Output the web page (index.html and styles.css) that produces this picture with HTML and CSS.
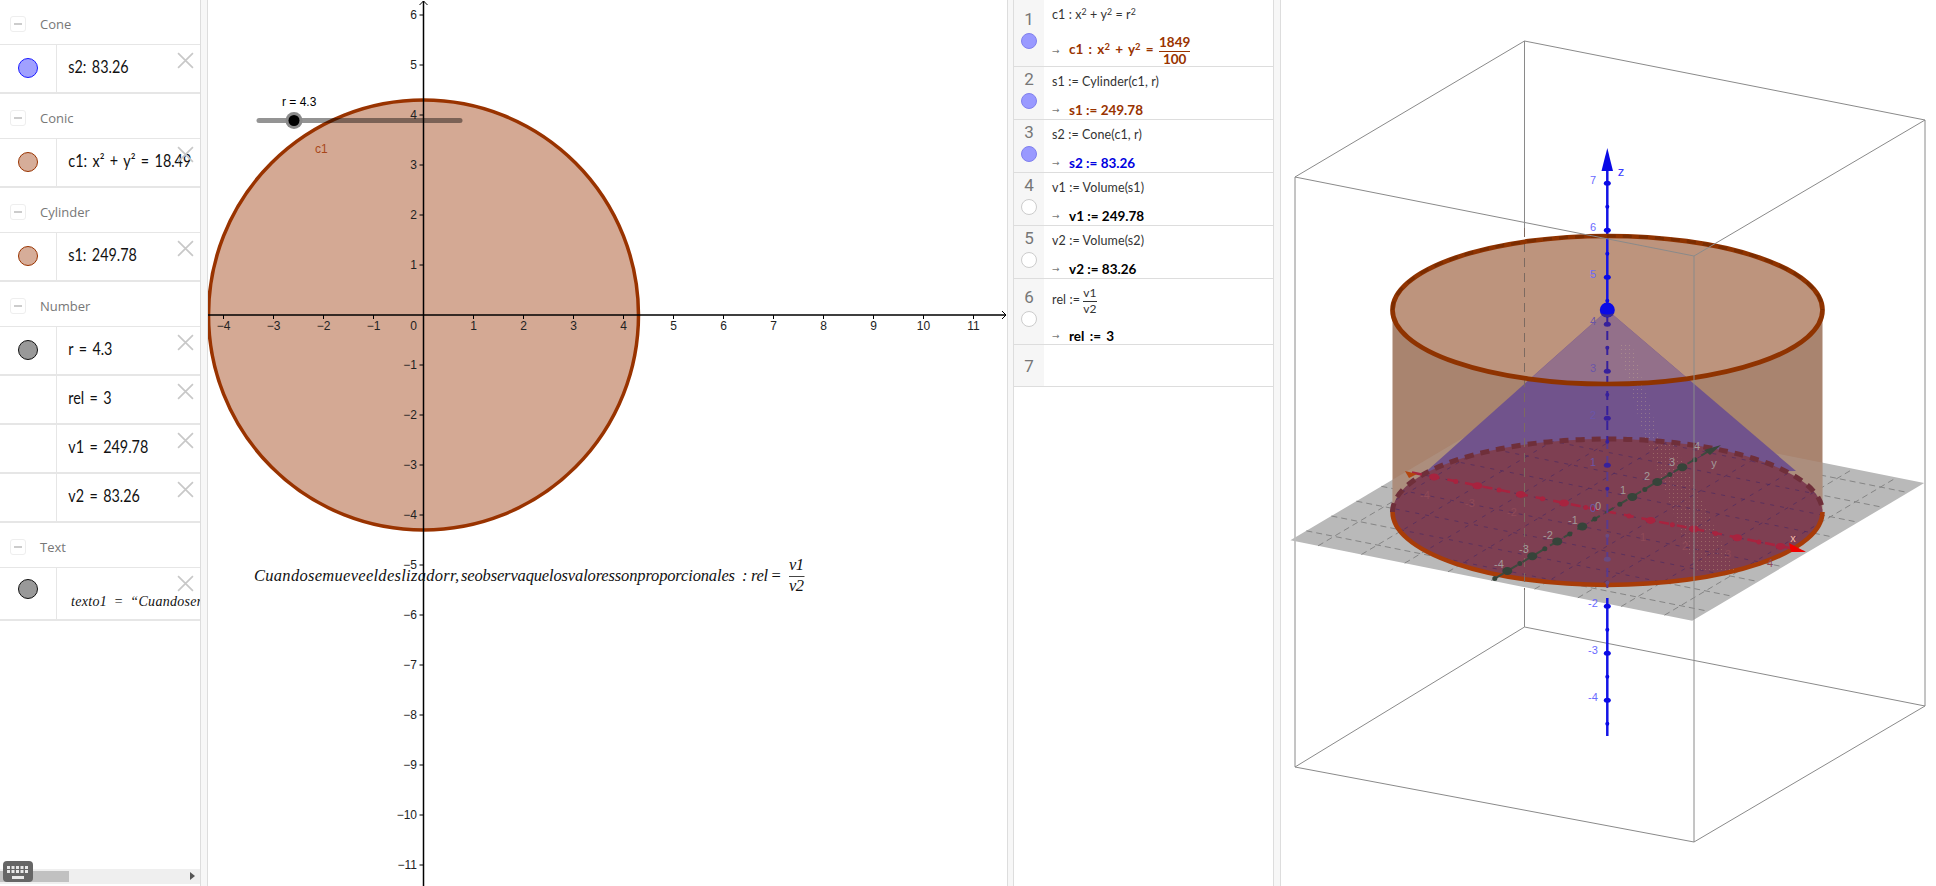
FILE: index.html
```html
<!DOCTYPE html>
<html lang="en">
<head>
    <meta charset="UTF-8">
    <title>GeoGebra - Cylinder and Cone</title>
    <link rel="stylesheet" href="styles.css">
</head>
<body>
    <!-- Algebra view -->
    <aside class="algebra">
        <div class="algebra-list">
            <div class="group"><span class="collapse"></span>Cone</div>
            <div class="row">
                <div class="row-marble"><span class="marble marble-blue"></span></div>
                <div class="row-value">s2: 83.26</div>
                <svg class="close" viewBox="0 0 16 16"><path d="M1 1L15 15M15 1L1 15"/></svg>
            </div>

            <div class="group"><span class="collapse"></span>Conic</div>
            <div class="row">
                <div class="row-marble"><span class="marble marble-brown"></span></div>
                <div class="row-value">c1: x² + y² = 18.49</div>
                <svg class="close" viewBox="0 0 16 16"><path d="M1 1L15 15M15 1L1 15"/></svg>
            </div>

            <div class="group"><span class="collapse"></span>Cylinder</div>
            <div class="row">
                <div class="row-marble"><span class="marble marble-brown"></span></div>
                <div class="row-value">s1: 249.78</div>
                <svg class="close" viewBox="0 0 16 16"><path d="M1 1L15 15M15 1L1 15"/></svg>
            </div>

            <div class="group"><span class="collapse"></span>Number</div>
            <div class="row">
                <div class="row-marble"><span class="marble marble-gray"></span></div>
                <div class="row-value">r = 4.3</div>
                <svg class="close" viewBox="0 0 16 16"><path d="M1 1L15 15M15 1L1 15"/></svg>
            </div>
            <div class="row">
                <div class="row-marble"></div>
                <div class="row-value">rel = 3</div>
                <svg class="close" viewBox="0 0 16 16"><path d="M1 1L15 15M15 1L1 15"/></svg>
            </div>
            <div class="row">
                <div class="row-marble"></div>
                <div class="row-value">v1 = 249.78</div>
                <svg class="close" viewBox="0 0 16 16"><path d="M1 1L15 15M15 1L1 15"/></svg>
            </div>
            <div class="row">
                <div class="row-marble"></div>
                <div class="row-value">v2 = 83.26</div>
                <svg class="close" viewBox="0 0 16 16"><path d="M1 1L15 15M15 1L1 15"/></svg>
            </div>

            <div class="group"><span class="collapse"></span>Text</div>
            <div class="row row-text">
                <div class="row-marble"><span class="marble marble-gray"></span></div>
                <div class="row-value row-latex">texto1 = “Cuandosen</div>
                <svg class="close" viewBox="0 0 16 16"><path d="M1 1L15 15M15 1L1 15"/></svg>
            </div>
        </div>

        <div class="scrollbar">
            <div class="scroll-thumb"></div>
            <span class="scroll-arrow"></span>
        </div>
        <svg class="keyboard" viewBox="0 0 30 21">
            <rect class="key-bg" width="30" height="21" rx="4"/>
            <path class="key" d="M4 5h3v3h-3zM8.500 5h3v3h-3zM13 5h3v3h-3zM17.500 5h3v3h-3zM22 5h3v3h-3zM4 9h3v3h-3zM8.500 9h3v3h-3zM13 9h3v3h-3zM17.500 9h3v3h-3zM22 9h3v3h-3zM9 15h12v3h-12z"/>
        </svg>
    </aside>

    <div class="splitter"></div>

    <!-- Graphics view -->
    <svg class="graphics" viewBox="208 0 799 886">
        <circle class="conic" cx="423.500" cy="315" r="215"/>
        <g class="axis">
            <path d="M423.500 1V886M208 315H1006"/>
            <path d="M419.500 5L423.500 1L427.500 5M1002 311L1006 315L1002 319"/>
            <path d="M223.500 315v4M273.500 315v4M323.500 315v4M373.500 315v4M473.500 315v4M523.500 315v4M573.500 315v4M623.500 315v4M673.500 315v4M723.500 315v4M773.500 315v4M823.500 315v4M873.500 315v4M923.500 315v4M973.500 315v4"/>
            <path d="M419.500 15h4M419.500 65h4M419.500 115h4M419.500 165h4M419.500 215h4M419.500 265h4M419.500 365h4M419.500 415h4M419.500 465h4M419.500 515h4M419.500 565h4M419.500 615h4M419.500 665h4M419.500 715h4M419.500 765h4M419.500 815h4M419.500 865h4"/>
        </g>
        <g class="tick-x">
            <text x="223.500" y="330">−4</text>
            <text x="273.500" y="330">−3</text>
            <text x="323.500" y="330">−2</text>
            <text x="373.500" y="330">−1</text>
            <text x="413.500" y="330">0</text>
            <text x="473.500" y="330">1</text>
            <text x="523.500" y="330">2</text>
            <text x="573.500" y="330">3</text>
            <text x="623.500" y="330">4</text>
            <text x="673.500" y="330">5</text>
            <text x="723.500" y="330">6</text>
            <text x="773.500" y="330">7</text>
            <text x="823.500" y="330">8</text>
            <text x="873.500" y="330">9</text>
            <text x="923.500" y="330">10</text>
            <text x="973.500" y="330">11</text>
        </g>
        <g class="tick-y">
            <text x="417" y="19">6</text>
            <text x="417" y="69">5</text>
            <text x="417" y="119">4</text>
            <text x="417" y="169">3</text>
            <text x="417" y="219">2</text>
            <text x="417" y="269">1</text>
            <text x="417" y="369">−1</text>
            <text x="417" y="419">−2</text>
            <text x="417" y="469">−3</text>
            <text x="417" y="519">−4</text>
            <text x="417" y="569">−5</text>
            <text x="417" y="619">−6</text>
            <text x="417" y="669">−7</text>
            <text x="417" y="719">−8</text>
            <text x="417" y="769">−9</text>
            <text x="417" y="819">−10</text>
            <text x="417" y="869">−11</text>
        </g>
        <text class="conic-label" x="315" y="153">c1</text>

        <!-- slider -->
        <line class="slider-track" x1="259" y1="120.500" x2="460" y2="120.500"/>
        <circle class="slider-ring" cx="294" cy="120.500" r="8.500"/>
        <circle class="slider-knob" cx="294" cy="120.500" r="5.500"/>
        <text class="slider-label" x="282" y="106">r = 4.3</text>

        <!-- text object -->
        <g class="math-text">
            <text x="254" y="581" textLength="205">Cuandosemueveeldeslizadorr,</text>
            <text x="461" y="581" textLength="274">seobservaquelosvaloressonproporcionales</text>
            <text x="742" y="581">:</text>
            <text x="751" y="581" textLength="17">rel</text>
            <text class="math-upright" x="771.500" y="581">=</text>
            <text x="789" y="569.500" textLength="15">v1</text>
            <text x="789" y="591" textLength="15">v2</text>
            <line x1="789" y1="576.500" x2="804.500" y2="576.500"/>
        </g>
    </svg>

    <div class="splitter splitter-narrow"></div>

    <!-- CAS view -->
    <section class="cas">
        <div class="cas-row cas-row-tall">
            <div class="cas-side"><span class="cas-num">1</span><span class="cas-marble cas-marble-on"></span></div>
            <div class="cas-body">
                <div class="cas-input">c1 : x<sup>2</sup> + y<sup>2</sup> = r<sup>2</sup></div>
                <div class="cas-output"><span class="cas-arrow">→</span><span class="out-brown out-spaced">c1 : x<sup>2</sup> + y<sup>2</sup> = <span class="frac"><span>1849</span><span>100</span></span></span></div>
            </div>
        </div>
        <div class="cas-row">
            <div class="cas-side"><span class="cas-num">2</span><span class="cas-marble cas-marble-on"></span></div>
            <div class="cas-body">
                <div class="cas-input">s1 := Cylinder(c1, r)</div>
                <div class="cas-output"><span class="cas-arrow">→</span><span class="out-brown">s1 := 249.78</span></div>
            </div>
        </div>
        <div class="cas-row">
            <div class="cas-side"><span class="cas-num">3</span><span class="cas-marble cas-marble-on"></span></div>
            <div class="cas-body">
                <div class="cas-input">s2 := Cone(c1, r)</div>
                <div class="cas-output"><span class="cas-arrow">→</span><span class="out-blue">s2 := 83.26</span></div>
            </div>
        </div>
        <div class="cas-row">
            <div class="cas-side"><span class="cas-num">4</span><span class="cas-marble"></span></div>
            <div class="cas-body">
                <div class="cas-input">v1 := Volume(s1)</div>
                <div class="cas-output"><span class="cas-arrow">→</span><span class="out-black">v1 := 249.78</span></div>
            </div>
        </div>
        <div class="cas-row">
            <div class="cas-side"><span class="cas-num">5</span><span class="cas-marble"></span></div>
            <div class="cas-body">
                <div class="cas-input">v2 := Volume(s2)</div>
                <div class="cas-output"><span class="cas-arrow">→</span><span class="out-black">v2 := 83.26</span></div>
            </div>
        </div>
        <div class="cas-row cas-row-frac">
            <div class="cas-side"><span class="cas-num">6</span><span class="cas-marble"></span></div>
            <div class="cas-body">
                <div class="cas-input">rel := <span class="frac frac-thin"><span>v1</span><span>v2</span></span></div>
                <div class="cas-output"><span class="cas-arrow">→</span><span class="out-black out-spaced">rel := 3</span></div>
            </div>
        </div>
        <div class="cas-row cas-row-empty">
            <div class="cas-side"><span class="cas-num">7</span></div>
            <div class="cas-body"></div>
        </div>
    </section>

    <div class="splitter"></div>

    <!-- 3D view -->
    <svg class="view3d" viewBox="1281 0 655 886">
        <defs>
            <clipPath id="topDisc"><ellipse cx="1607.500" cy="310" rx="215" ry="74"/></clipPath>
            <clipPath id="bottomDisc"><ellipse cx="1607.500" cy="512" rx="215" ry="73"/></clipPath>
            <clipPath id="body"><path d="M1392.500 310H1822.500V512A215 73 0 0 1 1392.500 512Z"/></clipPath>
            <path id="grid" d="M1506.400 412.180L1908.200 492.580M1481.400 427L1883.200 507.400M1456.400 441.840L1858.200 522.240M1431.400 456.670L1833.200 537.070M1406.400 471.500L1808.200 551.900M1381.400 486.330L1783.200 566.730M1356.400 501.160L1758.200 581.560M1331.400 516L1733.200 596.400M1306.400 530.820L1708.200 611.220M1664.500 615.180L1896.500 477.580M1621.200 606.500L1853.200 468.900M1577.900 597.840L1809.900 460.240M1534.600 589.170L1766.600 451.570M1491.300 580.500L1723.300 442.900M1448 571.830L1680 434.230M1404.700 563.160L1636.700 425.560M1361.400 554.500L1593.400 416.900M1318.100 545.820L1550.100 408.220"/>
            <path id="coneShape" d="M1607.500 310L1420 477L1796 471Z"/>
            <pattern id="dots" width="4" height="4" patternUnits="userSpaceOnUse">
                <rect class="dot" x="1" y="1" width="1" height="1"/>
            </pattern>
        </defs>

        <!-- back of the bounding box -->
        <g class="box-line">
            <path d="M1295 177L1524.500 41L1925 120M1295 767L1524.500 627L1925 706L1694 842L1295 767"/>
            <path d="M1295 177V767M1524.500 41V228M1524.500 590V627M1925 120V706"/>
        </g>

        <!-- xOy plane -->
        <polygon class="plane" points="1692.200,620.700 1924.200,483.100 1522.400,402.700 1290.400,540.300"/>
        <use class="plane-grid" href="#grid"/>

        <!-- cylinder -->
        <path class="cyl-body" d="M1392.500 310H1822.500V512A215 73 0 0 1 1392.500 512Z"/>
        <g clip-path="url(#body)">
            <polygon class="plane-through" points="1692.200,620.700 1924.200,483.100 1522.400,402.700 1290.400,540.300"/>
        </g>
        <ellipse class="cyl-top" cx="1607.500" cy="310" rx="215" ry="74"/>

        <!-- cone -->
        <use class="cone" href="#coneShape"/>
        <g clip-path="url(#topDisc)"><use class="cone-top" href="#coneShape"/></g>

        <!-- bottom disc -->
        <ellipse class="disc" cx="1607.500" cy="512" rx="215" ry="73"/>
        <g clip-path="url(#bottomDisc)"><use class="disc-grid" href="#grid"/></g>
        <path class="disc-back" d="M1392.500 512A215 73 0 0 1 1822.500 512"/>
        <path class="disc-front" d="M1392.500 512A215 73 0 0 0 1822.500 512"/>

        <!-- moire strip the renderer leaves on the cone -->
        <polygon class="moire" points="1618,345 1632,345 1660,440 1645,440"/>
        <polygon class="moire" points="1648,445 1675,445 1735,570 1695,570"/>

        <!-- dashed back edge inside the cylinder -->
        <path class="box-dashed" d="M1524.500 228V590"/>

        <!-- x axis -->
        <path class="x-axis" d="M1412 472.500L1795 549"/>
        <polygon class="x-arrow" points="1789,543 1806,552 1791,552"/>
        <polygon class="x-arrow-back" points="1405,471 1417,474 1409,478"/>
        <g class="x-ticks">
            <ellipse cx="1434.100" cy="477" rx="5" ry="3.500"/><ellipse cx="1477.400" cy="485.700" rx="5" ry="3.500"/><ellipse cx="1520.700" cy="494.400" rx="5" ry="3.500"/><ellipse cx="1564" cy="503" rx="5" ry="3.500"/><ellipse cx="1650.600" cy="520.400" rx="5" ry="3.500"/><ellipse cx="1693.900" cy="529" rx="5" ry="3.500"/><ellipse cx="1737.200" cy="537.700" rx="5" ry="3.500"/><ellipse cx="1780.500" cy="546.400" rx="5" ry="3.500"/>
            <circle cx="1455.800" cy="481.400" r="2.500"/><circle cx="1499" cy="490" r="2.500"/><circle cx="1542.400" cy="498.700" r="2.500"/><circle cx="1585.700" cy="507.400" r="2.500"/><circle cx="1629" cy="516" r="2.500"/><circle cx="1672.300" cy="524.700" r="2.500"/><circle cx="1715.600" cy="533.400" r="2.500"/><circle cx="1758.900" cy="542" r="2.500"/>
        </g>

        <!-- y axis -->
        <path class="y-axis" d="M1495 578.400L1708 451.500"/>
        <polygon class="y-arrow" points="1704,450 1721,445 1710,455"/>
        <g class="y-ticks">
            <ellipse cx="1682.300" cy="467.200" rx="5" ry="4"/><ellipse cx="1657.300" cy="482" rx="5" ry="4"/><ellipse cx="1632.300" cy="496.900" rx="5" ry="4"/><ellipse cx="1582.300" cy="526.500" rx="5" ry="4"/><ellipse cx="1557.300" cy="541.400" rx="5" ry="4"/><ellipse cx="1532.300" cy="556.200" rx="5" ry="4"/><ellipse cx="1507.300" cy="571" rx="5" ry="4"/>
            <circle cx="1694.800" cy="459.800" r="2.500"/><circle cx="1669.800" cy="474.600" r="2.500"/><circle cx="1644.800" cy="489.500" r="2.500"/><circle cx="1619.800" cy="504.300" r="2.500"/><circle cx="1594.800" cy="519.100" r="2.500"/><circle cx="1569.800" cy="533.900" r="2.500"/><circle cx="1544.800" cy="548.800" r="2.500"/><circle cx="1519.800" cy="563.600" r="2.500"/><circle cx="1494.800" cy="578.400" r="2.500"/>
        </g>

        <!-- z axis -->
        <path class="z-axis" d="M1607.300 168V305M1607.300 598V736"/>
        <path class="z-axis-in" d="M1607.300 316V440"/>
        <path class="z-axis-faded" d="M1607.300 440V588"/>
        <polygon class="z-arrow" points="1607.300,148 1613,171 1601.500,171"/>
        <g class="z-ticks">
            <ellipse cx="1607.300" cy="183.300" rx="3.500" ry="2.500"/><ellipse cx="1607.300" cy="230.300" rx="3.500" ry="2.500"/><ellipse cx="1607.300" cy="277.300" rx="3.500" ry="2.500"/>
            <circle cx="1607.300" cy="206.800" r="2"/><circle cx="1607.300" cy="253.800" r="2"/><circle cx="1607.300" cy="300.800" r="2"/>
            <ellipse cx="1607.300" cy="606.300" rx="3.500" ry="2.500"/><ellipse cx="1607.300" cy="653.300" rx="3.500" ry="2.500"/><ellipse cx="1607.300" cy="700.300" rx="3.500" ry="2.500"/>
            <circle cx="1607.300" cy="629.800" r="2"/><circle cx="1607.300" cy="676.800" r="2"/><circle cx="1607.300" cy="723.800" r="2"/>
        </g>
        <g class="z-ticks-in">
            <ellipse cx="1607.300" cy="324.300" rx="3.500" ry="2.500"/><ellipse cx="1607.300" cy="371.300" rx="3.500" ry="2.500"/><ellipse cx="1607.300" cy="418.300" rx="3.500" ry="2.500"/><ellipse cx="1607.300" cy="465.300" rx="3.500" ry="2.500"/>
            <circle cx="1607.300" cy="347.800" r="2"/><circle cx="1607.300" cy="394.800" r="2"/><circle cx="1607.300" cy="441.800" r="2"/><circle cx="1607.300" cy="488.800" r="2"/>
        </g>
        <g class="z-ticks-faded">
            <ellipse cx="1607.300" cy="559.300" rx="3.500" ry="2.500"/><circle cx="1607.300" cy="535.800" r="2"/><circle cx="1607.300" cy="582.800" r="2"/>
        </g>

        <g class="labels-z">
            <text x="1593" y="184">7</text><text x="1593" y="231">6</text><text x="1593" y="278">5</text>
            <text x="1593" y="607">-2</text><text x="1593" y="654">-3</text><text x="1593" y="701">-4</text>
            <text class="axis-name" x="1621" y="176">z</text>
        </g>
        <g class="labels-z-in">
            <text x="1593" y="325">4</text><text x="1593" y="372">3</text><text x="1593" y="419">2</text><text x="1593" y="466">1</text><text x="1593" y="512">0</text>
        </g>
        <g class="labels-y">
            <text x="1697" y="450">4</text><text x="1672" y="466">3</text><text x="1647" y="480">2</text><text x="1623" y="494">1</text><text x="1598" y="510">0</text><text x="1573" y="524">-1</text><text x="1548" y="539">-2</text><text x="1524" y="553">-3</text><text x="1499" y="568">-4</text><text x="1714" y="467">y</text>
        </g>
        <g class="labels-x">
            <text x="1425" y="499">-4</text><text x="1470" y="507">-3</text><text x="1512" y="516">-2</text><text x="1643" y="541">1</text><text x="1685" y="550">2</text><text x="1728" y="558">3</text><text x="1770" y="567">4</text>
        </g>
        <text class="label-x-name" x="1793" y="542">x</text>

        <!-- top rim -->
        <ellipse class="cyl-rim" cx="1607.500" cy="310" rx="215" ry="74"/>
        <path class="cyl-rim-back" d="M1392.500 310A215 74 0 0 1 1822.500 310"/>

        <!-- apex point -->
        <circle class="apex" cx="1607.300" cy="310" r="7.500"/>
        <path class="apex-shade" d="M1600.500 313A7.500 7.500 0 0 0 1614 313A10 5 0 0 1 1600.500 313Z"/>

        <!-- front of the bounding box -->
        <g class="box-line">
            <path d="M1295 177L1694 256L1925 120M1694 256V842"/>
        </g>
    </svg>
</body>
</html>
```

FILE: styles.css
```css
* {
    box-sizing: border-box;
    margin: 0;
    padding: 0;
}

body {
    display: flex;
    height: 886px;
    overflow: hidden;
    background: white;
    font-family: "Lato", sans-serif;
}

/* algebra view */
.algebra {
    position: relative;
    width: 200px;
    flex: none;
    display: flex;
    flex-direction: column;
    overflow: hidden;
}

.algebra-list {
    flex: 1;
}

.group {
    height: 45px;
    display: flex;
    align-items: center;
    padding-left: 10px;
    padding-top: 3px;
    font-family: "Open Sans", sans-serif;
    font-size: 13px;
    color: #777;
    border-bottom: 1px solid #e6e6e6;
}

.collapse {
    position: relative;
    width: 16px;
    height: 16px;
    margin-right: 14px;
    border: 1px solid #eee;
    border-radius: 3px;
}

.collapse::after {
    content: "";
    position: absolute;
    left: 3px;
    top: 6px;
    width: 8px;
    height: 2px;
    background: #ccc;
}

.row {
    position: relative;
    height: 49px;
    display: flex;
    border-bottom: 2px solid #e6e6e6;
}

.row-text {
    height: 53px;
}

.row-marble {
    width: 57px;
    flex: none;
    display: flex;
    align-items: center;
    justify-content: center;
    padding-bottom: 1px;
    border-right: 1px solid #e6e6e6;
}

.row-text .row-marble {
    padding-bottom: 9px;
}

.row-value {
    padding-left: 13px;
    font-size: 16.500px;
    line-height: 45px;
    color: #111;
    white-space: nowrap;
    word-spacing: 2px;
    transform: scaleX(0.87);
    transform-origin: left center;
}

.row-latex {
    padding-left: 14px;
    padding-top: 11px;
    font-family: "Liberation Serif", serif;
    font-style: italic;
    font-size: 14px;
    letter-spacing: 0.3px;
    word-spacing: 3px;
    transform: none;
}

.marble {
    width: 20px;
    height: 20px;
    border-radius: 50%;
    border: 1px solid #000;
}

.marble-blue {
    background: #a0a0ff;
    border-color: #1a1aff;
}

.marble-brown {
    background: #d6ad99;
    border-color: #993300;
}

.marble-gray {
    background: #999;
    border-color: #111;
}

.close {
    position: absolute;
    top: 7px;
    right: 6px;
    width: 17px;
    height: 17px;
    fill: none;
    stroke: #c8c8c8;
    stroke-width: 1.600;
}

.scrollbar {
    position: relative;
    height: 15px;
    margin-bottom: 2px;
    background: #efefef;
}

.scroll-thumb {
    width: 69px;
    height: 11px;
    margin-top: 2px;
    background: #c1c1c1;
}

.scroll-arrow {
    position: absolute;
    right: 5px;
    top: 3px;
    border-left: 5px solid #555;
    border-top: 4px solid transparent;
    border-bottom: 4px solid transparent;
}

.keyboard {
    position: absolute;
    left: 3px;
    bottom: 4px;
    width: 30px;
    height: 21px;
}

.key-bg {
    fill: #666;
}

.key {
    fill: #e8e8e8;
}

/* splitters */
.splitter {
    width: 8px;
    flex: none;
    background: #f7f7f7;
    border-left: 1px solid #ddd;
    border-right: 1px solid #ddd;
}

.splitter-narrow {
    width: 7px;
}

/* graphics view */
.graphics {
    width: 799px;
    height: 886px;
    flex: none;
}

.graphics text {
    font-family: "Liberation Sans", sans-serif;
    font-size: 12px;
}

.conic {
    fill: rgba(153, 51, 0, 0.42);
    stroke: #993300;
    stroke-width: 3.500;
}

.axis path {
    fill: none;
    stroke: #000;
    stroke-width: 1;
}

.axis path:first-child {
    stroke-width: 1.500;
}

.tick-x text {
    text-anchor: middle;
    fill: #222;
}

.tick-y text {
    text-anchor: end;
    fill: #222;
}

.conic-label {
    fill: #a8471a;
}

.slider-track {
    stroke: rgba(0, 0, 0, 0.42);
    stroke-width: 5;
    stroke-linecap: round;
}

.slider-ring {
    fill: #8a8a8a;
}

.slider-knob {
    fill: #000;
}

.slider-label {
    fill: #000;
}

.graphics .math-text text {
    font-family: "Liberation Serif", serif;
    font-style: italic;
    font-size: 16.500px;
    fill: #111;
}

.graphics .math-text .math-upright {
    font-style: normal;
}

.math-text line {
    stroke: #444;
    stroke-width: 1;
}

/* cas view */
.cas {
    width: 259px;
    flex: none;
}

.cas-row {
    display: flex;
    height: 53px;
    border-bottom: 1px solid #ddd;
}

.cas-row-tall {
    height: 67px;
}

.cas-row-frac {
    height: 66px;
}

.cas-row-empty {
    height: 42px;
}

.cas-side {
    width: 30px;
    flex: none;
    display: flex;
    flex-direction: column;
    align-items: center;
    justify-content: center;
    background: #f6f6f6;
}

.cas-num {
    font-family: "Roboto", sans-serif;
    font-size: 17px;
    line-height: 20px;
    color: #777;
}

.cas-marble {
    width: 16px;
    height: 16px;
    margin-top: 4px;
    margin-bottom: 9px;
    border-radius: 50%;
    background: white;
    border: 1px solid #ccc;
}

.cas-marble-on {
    background: #9999ff;
    border-color: #8080ee;
}

.cas-body {
    flex: 1;
    padding: 7px 0 0 8px;
}

.cas-input {
    min-height: 16px;
    font-size: 12.500px;
    letter-spacing: 0.1px;
    line-height: 16px;
    color: #333;
    white-space: pre;
}

.cas-input sup,
.cas-output sup {
    font-size: 0.7em;
    line-height: 0;
    vertical-align: 0.5em;
}

.cas-output {
    display: flex;
    align-items: center;
    min-height: 16px;
    margin-top: 12px;
    font-size: 13.500px;
    font-weight: 700;
    line-height: 16px;
    white-space: pre;
}

.cas-arrow {
    width: 17px;
    font-family: "DejaVu Sans", sans-serif;
    font-size: 9px;
    font-weight: 400;
    color: #777;
}

.out-brown {
    color: #993300;
}

.out-blue {
    color: #0000e0;
}

.out-black {
    color: #000;
}

.out-spaced {
    word-spacing: 2px;
}

.frac {
    display: inline-flex;
    flex-direction: column;
    align-items: center;
    vertical-align: middle;
    line-height: 15px;
}

.frac span:first-child {
    padding-bottom: 1px;
    border-bottom: 1px solid currentColor;
}

.frac-thin {
    line-height: 14px;
    font-size: 12px;
}

/* 3d view */
.view3d {
    width: 655px;
    height: 886px;
    flex: none;
}

.view3d text {
    font-family: "Liberation Sans", sans-serif;
    font-size: 11px;
    text-anchor: middle;
}

.box-line path {
    fill: none;
    stroke: #8a8a8a;
    stroke-width: 1;
}

.box-dashed {
    fill: none;
    stroke: #7d6a60;
    stroke-width: 1;
    stroke-dasharray: 9 6;
}

.plane {
    fill: #b9b9b9;
}

.plane-grid {
    fill: none;
    stroke: #858585;
    stroke-width: 1;
    stroke-dasharray: 6 4;
}

.plane-through {
    fill: rgba(190, 190, 190, 0.18);
}

.cyl-body {
    fill: #a9846f;
}

.cyl-top {
    fill: #bd947d;
}

.cone {
    fill: #71538c;
}

.cone-top {
    fill: #93708a;
}

.disc {
    fill: #7e3f52;
}

.disc-grid {
    fill: none;
    stroke: rgba(70, 40, 100, 0.6);
    stroke-width: 1;
    stroke-dasharray: 4 6;
}

.disc-back {
    fill: none;
    stroke: #6f2f3a;
    stroke-width: 5;
    stroke-dasharray: 9 7;
}

.disc-front {
    fill: none;
    stroke: #a83c08;
    stroke-width: 4.500;
}

.moire {
    fill: url(#dots);
}

.dot {
    fill: rgba(225, 205, 150, 0.28);
}

.x-axis {
    fill: none;
    stroke: #a8233f;
    stroke-width: 2.500;
    stroke-dasharray: 10 8;
}

.x-ticks {
    fill: #a8233f;
}

.x-arrow {
    fill: #f00000;
}

.x-arrow-back {
    fill: #b3450f;
}

.y-axis {
    fill: none;
    stroke: #3d4a3e;
    stroke-width: 2;
    stroke-dasharray: 10 6;
}

.y-ticks {
    fill: #36443a;
}

.y-arrow {
    fill: #38453b;
}

.z-axis {
    fill: none;
    stroke: #1414e6;
    stroke-width: 2.500;
}

.z-axis-in {
    fill: none;
    stroke: #37209c;
    stroke-width: 2;
    stroke-dasharray: 9 6;
}

.z-axis-faded {
    fill: none;
    stroke: #5a3a8c;
    stroke-width: 2;
    stroke-dasharray: 9 7;
}

.z-arrow {
    fill: #0a0ae6;
}

.z-ticks {
    fill: #0a0ae6;
}

.z-ticks-in {
    fill: #37209c;
}

.z-ticks-faded {
    fill: #6a4a80;
}

.labels-z text {
    fill: #6a6aff;
}

.view3d .labels-z .axis-name {
    font-size: 13px;
    fill: #3a3aff;
}

.labels-z-in text {
    fill: #6a55a8;
}

.labels-y text {
    fill: #a39a9a;
}

.labels-x text {
    fill: #8f4a58;
}

.label-x-name {
    fill: #f3b7a6;
}

.cyl-rim {
    fill: none;
    stroke: #8f3300;
    stroke-width: 4.700;
}

.cyl-rim-back {
    fill: none;
    stroke: #7a2c00;
    stroke-width: 3;
    stroke-dasharray: 9 7;
}

.apex {
    fill: #0a0ae6;
}

.apex-shade {
    fill: #3a2a8c;
}
```
